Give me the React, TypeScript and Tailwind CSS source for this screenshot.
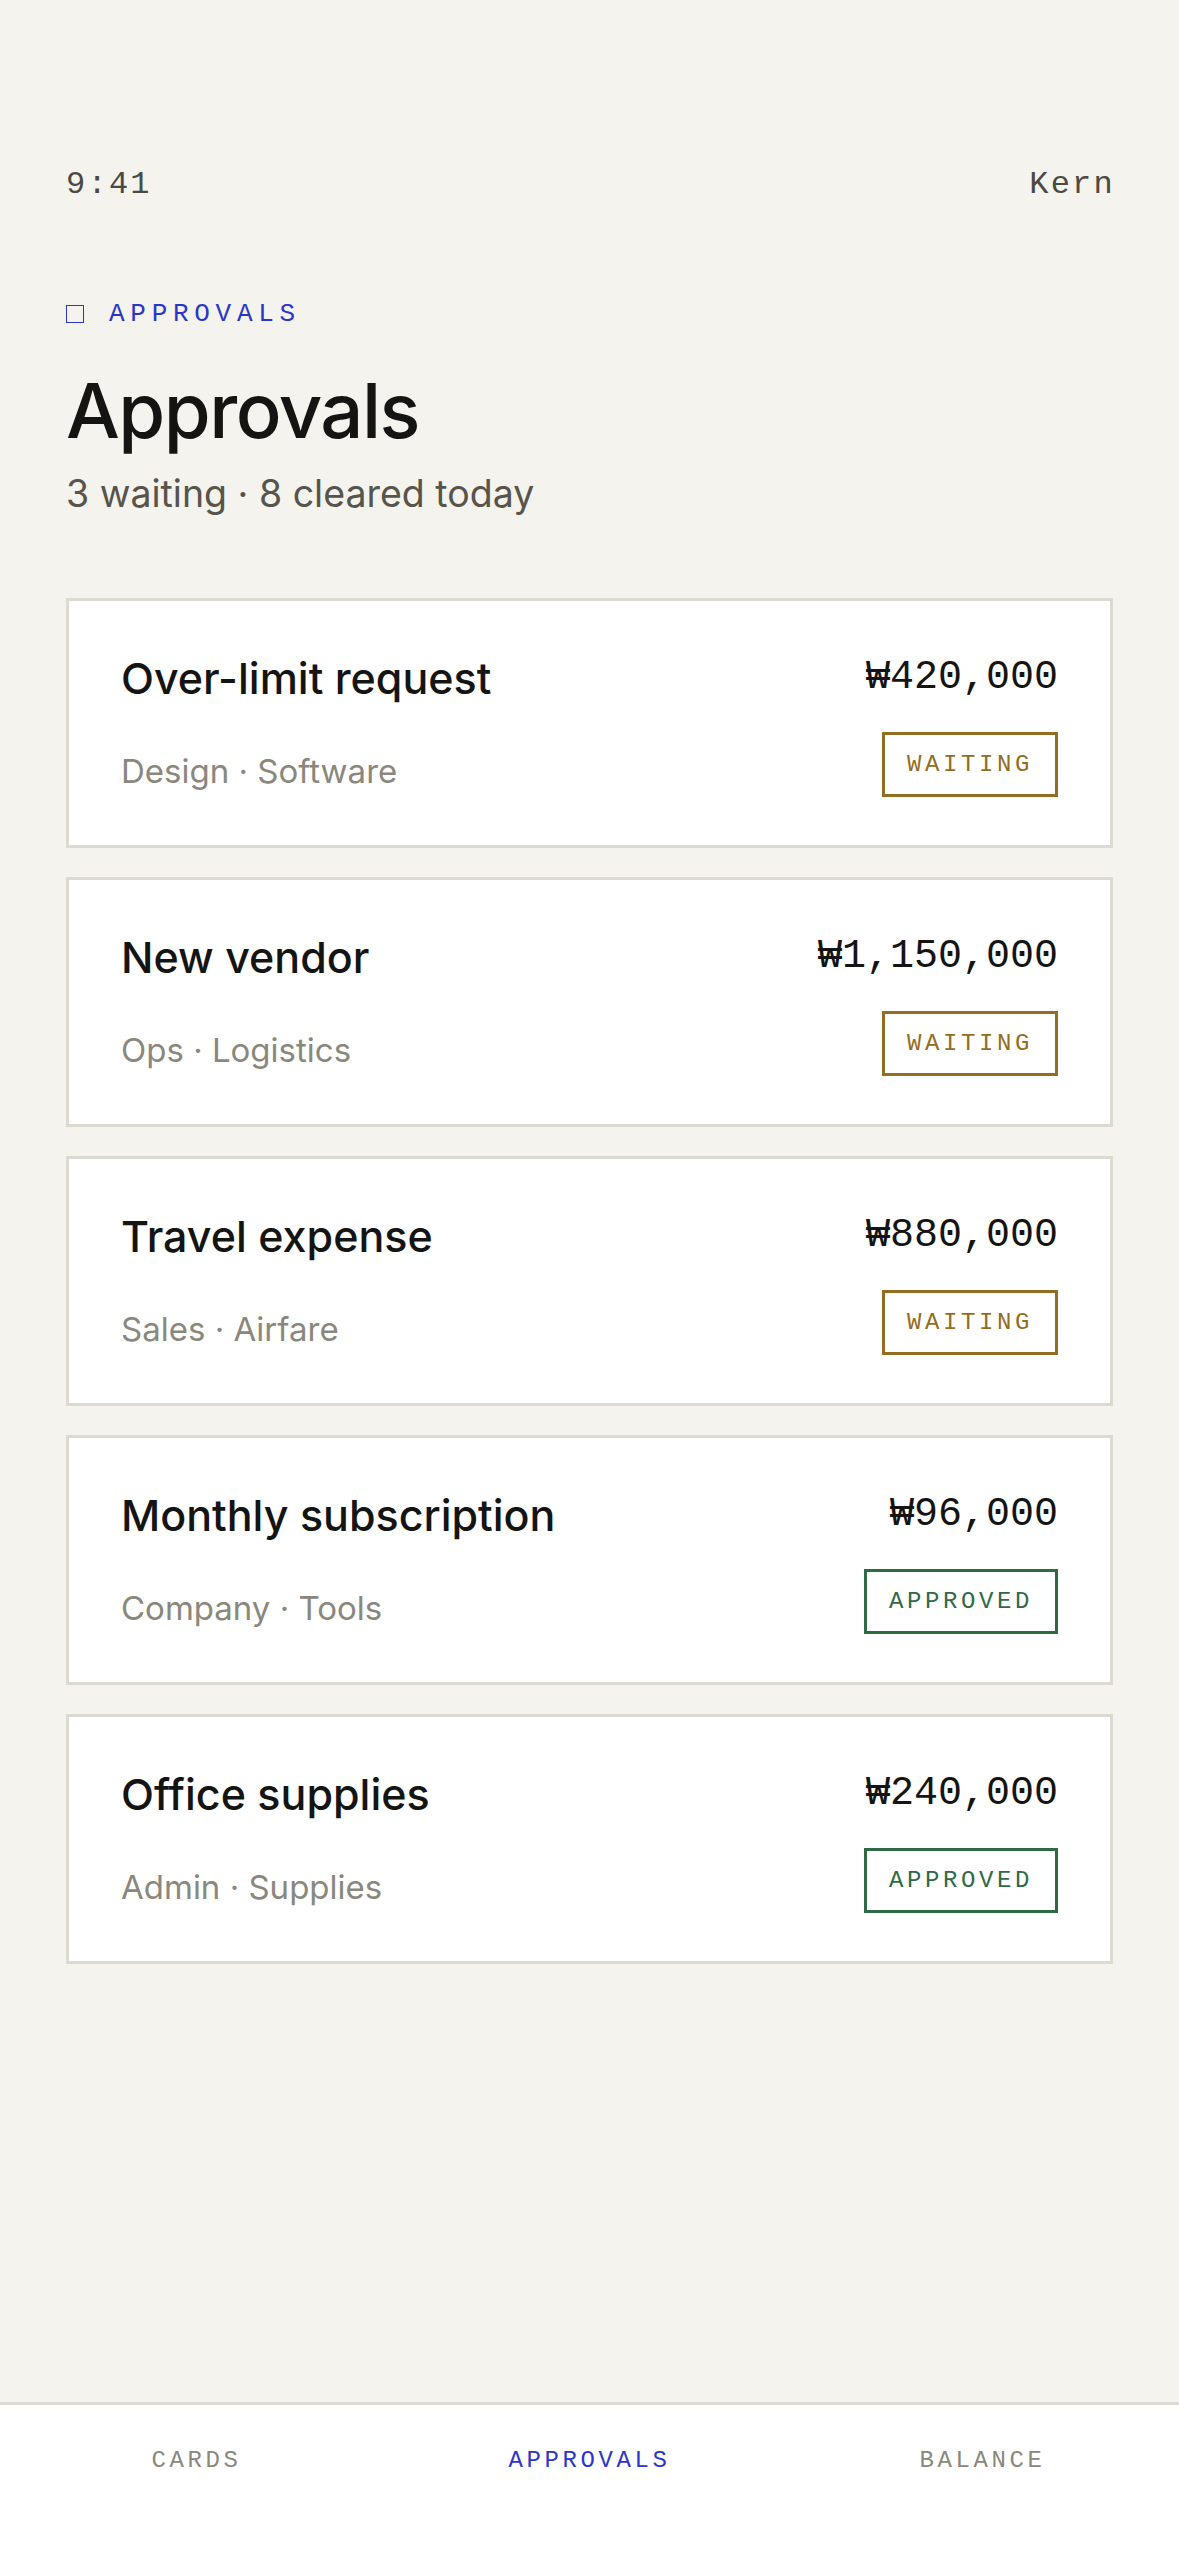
const mono = "font-['Liberation_Mono','DejaVu_Sans_Mono',monospace]";
const sans = "font-['Inter','Noto_Sans',sans-serif]";

type Status = "waiting" | "approved";

const requests: { title: string; meta: string; amount: string; status: Status }[] = [
  { title: "Over-limit request", meta: "Design · Software", amount: "₩420,000", status: "waiting" },
  { title: "New vendor", meta: "Ops · Logistics", amount: "₩1,150,000", status: "waiting" },
  { title: "Travel expense", meta: "Sales · Airfare", amount: "₩880,000", status: "waiting" },
  { title: "Monthly subscription", meta: "Company · Tools", amount: "₩96,000", status: "approved" },
  { title: "Office supplies", meta: "Admin · Supplies", amount: "₩240,000", status: "approved" },
];

function Badge({ status }: { status: Status }) {
  if (status === "waiting") {
    return (
      <span
        className={`${mono} inline-flex h-[65px] items-center border-[3px] border-[#946c22] px-[22px] text-[24px] tracking-[0.15em] text-[#946c22]`}
      >
        WAITING
      </span>
    );
  }
  return (
    <span
      className={`${mono} inline-flex h-[65px] items-center border-[3px] border-[#2f6a44] px-[22px] text-[24px] tracking-[0.15em] text-[#2f6a44]`}
    >
      APPROVED
    </span>
  );
}

function RequestCard({ title, meta, amount, status }: (typeof requests)[number]) {
  return (
    <div className="flex flex-col gap-[30px] border-[3px] border-[#dddbd1] bg-white px-[52px] pb-[48px] pt-[53px]">
      <div className="flex h-[48px] items-center justify-between">
        <span className={`${sans} text-[43px] font-medium text-[#141412]`}>{title}</span>
        <span className={`${mono} text-[40px] text-[#141412]`}>{amount}</span>
      </div>
      <div className="flex items-center justify-between">
        <span className={`${sans} pt-[12px] text-[33px] leading-[44px] text-[#8a877d]`}>{meta}</span>
        <Badge status={status} />
      </div>
    </div>
  );
}

export default function App() {
  return (
    <div className="flex min-h-[2556px] w-[1179px] flex-col bg-[#f4f3ed]">
      <div className="flex-1 px-[66px]">
        {/* status bar */}
        <div className={`${mono} mt-[165px] flex h-[40px] items-center justify-between text-[32px] tracking-[0.07em] text-[#4b4943]`}>
          <span>9:41</span>
          <span className="-mr-[2px]">Kern</span>
        </div>

        <div className={`${mono} mt-[93px] flex h-[32px] items-center gap-[25px] text-[26px] tracking-[0.22em] text-[#2b36c9]`}>
          <span className="h-[18px] w-[18px] border-[1.5px] border-[#2b36c9]" />
          <span>APPROVALS</span>
        </div>

        <h1 className={`${sans} mt-[42px] text-[76px] leading-none font-medium tracking-[-0.02em] text-[#141412]`}>
          Approvals
        </h1>
        <p className={`${sans} mt-[24px] text-[37.5px] leading-[44px] text-[#57544c]`}>
          3 waiting · 8 cleared today
        </p>

        <div className="mt-[82px] flex flex-col gap-[29px]">
          {requests.map((r) => (
            <RequestCard key={r.title} {...r} />
          ))}
        </div>
      </div>

      {/* tab bar */}
      <nav className={`${mono} grid h-[154px] grid-cols-3 border-t-[3px] border-[#dcdbd0] bg-white pt-[38px] text-[24px] tracking-[0.15em]`}>
        <div className="text-center text-[#8a877d]">CARDS</div>
        <div className="text-center text-[#2b36c9]">APPROVALS</div>
        <div className="text-center text-[#8a877d]">BALANCE</div>
      </nav>
    </div>
  );
}
